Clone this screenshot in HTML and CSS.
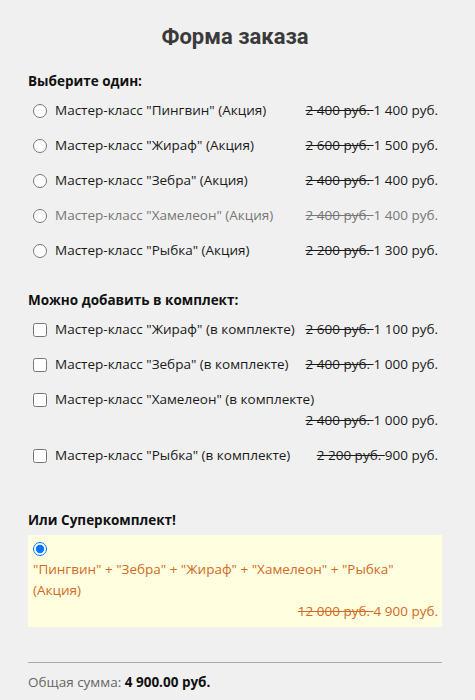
FILE: index.html
```html
<!DOCTYPE html>
<html lang="ru">
<head>
  <meta charset="UTF-8" />
  <meta name="viewport" content="width=device-width, initial-scale=1.0"/>
  <title>Форма заказа</title>
  <link rel="stylesheet" href="styles.css">
</head>
<body>

  <div class="order-container">
    <h1>Форма заказа</h1>
    <form id="orderForm">
      <div class="group">
        <h3>Выберите один:</h3>
        <label class="item">
          <input type="radio" name="main" value="penguin" />
          <span class="name">Мастер-класс "Пингвин" (Акция)</span>
          <span class="price"><s>2 400 руб. </s>1 400 руб.</span>
        </label>
        <label class="item">
          <input type="radio" name="main" value="giraffe" />
          <span class="name">Мастер-класс "Жираф" (Акция)</span>
          <span class="price"><s>2 600 руб. </s>1 500 руб.</span>
        </label>
        <label class="item">
          <input type="radio" name="main" value="zebra" />
          <span class="name">Мастер-класс "Зебра" (Акция)</span>
          <span class="price"><s>2 400 руб. </s>1 400 руб.</span>
        </label>
        <label class="item muted">
          <input type="radio" name="main" value="chameleon" />
          <span class="name">Мастер-класс "Хамелеон" (Акция)</span>
          <span class="price"><s>2 400 руб. </s>1 400 руб.</span>
        </label>
        <label class="item">
          <input type="radio" name="main" value="fish" />
          <span class="name">Мастер-класс "Рыбка" (Акция)</span>
          <span class="price"><s>2 200 руб. </s>1 300 руб.</span>
        </label>
      </div>

      <div class="group">
        <h3>Можно добавить в комплект:</h3>
        <label class="item">
          <input type="checkbox" name="extra" value="giraffe" />
          <span class="name">Мастер-класс "Жираф" (в комплекте)</span>
          <span class="price"><s>2 600 руб. </s>1 100 руб.</span>
        </label>
        <label class="item">
          <input type="checkbox" name="extra" value="zebra" />
          <span class="name">Мастер-класс "Зебра" (в комплекте)</span>
          <span class="price"><s>2 400 руб. </s>1 000 руб.</span>
        </label>
        <label class="item">
          <input type="checkbox" name="extra" value="chameleon" />
          <span class="name">Мастер-класс "Хамелеон" (в комплекте)</span>
          <span class="price"><s>2 400 руб. </s>1 000 руб.</span>
        </label>
        <label class="item">
          <input type="checkbox" name="extra" value="fish" />
          <span class="name">Мастер-класс "Рыбка" (в комплекте)</span>
          <span class="price"><s>2 200 руб. </s>900 руб.</span>
        </label>
      </div>

      <div class="group super">
        <h3>Или Суперкомплект!</h3>
        <label class="super-box">
          <input type="radio" name="main" value="super" checked />
          <span class="super-name">"Пингвин" + "Зебра" + "Жираф" + "Хамелеон" + "Рыбка" (Акция)</span>
          <span class="price"><s>12 000 руб. </s>4 900 руб.</span>
        </label>
      </div>

      <div class="total">
        Общая сумма: <strong id="total">4 900.00 руб.</strong>
      </div>
    </form>
  </div>

</body>
</html>
```

FILE: styles.css
```css
* {
  box-sizing: border-box;
}

body {
  font-family: 'Open Sans', sans-serif;
  font-size: 13.5px;
  line-height: 21px;
  color: #1a1a1a;
  background: #f0f0f0;
  margin: 0;
}

.order-container {
  padding: 22px 33px 20px 28px;
}

h1 {
  font-family: 'Roboto', sans-serif;
  font-size: 22px;
  line-height: 30px;
  font-weight: 700;
  color: #3a3a3a;
  text-align: center;
  margin: 0 0 19px;
}

h3 {
  font-size: 13.5px;
  font-weight: 700;
  margin: 0 0 1px;
  color: #111;
}

.group {
  margin-bottom: 22px;
}

.item {
  display: flex;
  flex-wrap: wrap;
  align-items: center;
  padding: 7px 4px 7px 0;
  cursor: pointer;
}

.item input {
  width: 14px;
  height: 14px;
  margin: 0 8px 0 5px;
}

.item .price {
  margin-left: auto;
  padding-left: 8px;
}

.item.muted {
  color: #777;
}

.super {
  margin-top: 37px;
}

.super h3 {
  margin-bottom: 4px;
}

.super-box {
  display: block;
  background: #ffffe0;
  color: #d2691e;
  padding: 3px 4px 5px 5px;
  cursor: pointer;
}

.super-box input {
  display: block;
  width: 14px;
  height: 14px;
  margin: 4px 0 3px 0;
}

.super-box .super-name {
  display: block;
}

.super-box .price {
  display: block;
  text-align: right;
}

.total {
  border-top: 1px solid #aaa;
  margin-top: 35px;
  padding-top: 9px;
  color: #666;
}

.total strong {
  color: #111;
}
```
